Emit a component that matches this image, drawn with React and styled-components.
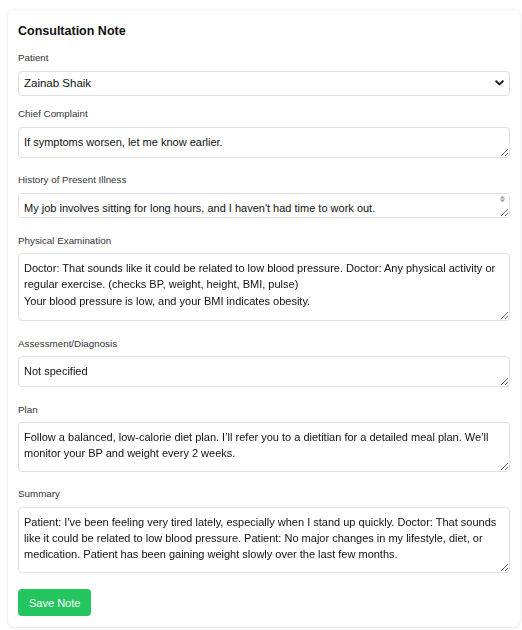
import React, { useState } from "react";
import styled, { createGlobalStyle } from "styled-components";

const GlobalStyle = createGlobalStyle`
  html, body {
    margin: 0;
    padding: 0;
    background: #ffffff;
  }
  body {
    font-family: "Liberation Sans", Arial, sans-serif;
    color: #111111;
  }
`;

const Page = styled.div`
  padding: 10px 2px 2px 8px;
`;

const Card = styled.div`
  background: #ffffff;
  border-radius: 6px;
  box-shadow: 0 0 3px rgba(0, 0, 0, 0.1), 0 1px 2px rgba(0, 0, 0, 0.06);
  padding: 14px 10px 11px 10px;
`;

const Title = styled.h2`
  margin: 0 0 14px 0;
  font-size: 12.5px;
  line-height: 14px;
  font-weight: 700;
  color: #111111;
`;

const Field = styled.div`
  display: flex;
  flex-direction: column;
  margin-bottom: 12px;
`;

const Label = styled.label`
  display: block;
  font-size: 9.8px;
  line-height: 12px;
  color: #333333;
  margin-bottom: 6.5px;
`;

const InputWrap = styled.div`
  position: relative;
`;

const Select = styled.select`
  display: block;
  width: 100%;
  height: 25.5px;
  box-sizing: border-box;
  appearance: none;
  border: 1px solid #e1e1e1;
  border-radius: 4px;
  background: #ffffff;
  padding: 0 24px 0 5px;
  font-family: "Liberation Sans", Arial, sans-serif;
  font-size: 11.5px;
  color: #111111;
  outline: none;
`;

const Chevron = styled.svg`
  position: absolute;
  right: 6px;
  top: 50%;
  width: 9px;
  height: 6px;
  margin-top: -3px;
  pointer-events: none;
`;

const ScrollArrows = styled.svg`
  position: absolute;
  right: 4px;
  top: 2px;
  width: 7px;
  height: 8px;
  pointer-events: none;
`;

const TextArea = styled.textarea`
  display: block;
  width: 100%;
  height: ${(p) => p.$h}px;
  box-sizing: border-box;
  border: 1px solid #e1e1e1;
  border-radius: 4px;
  background: #ffffff;
  padding: 6px 5px;
  margin-bottom: 4.5px;
  font-family: "Liberation Sans", Arial, sans-serif;
  font-size: 11px;
  line-height: 16.4px;
  color: #111111;
  outline: none;
  resize: vertical;
`;

const SaveButton = styled.button`
  display: inline-block;
  align-self: flex-start;
  height: 27px;
  padding: 0 11px;
  border: none;
  border-radius: 4px;
  background: #22c55e;
  color: #ffffff;
  font-family: "Liberation Sans", Arial, sans-serif;
  font-size: 11px;
  cursor: pointer;
`;

const fields = [
  {
    key: "chief",
    label: "Chief Complaint",
    h: 31,
    value: "If symptoms worsen, let me know earlier.",
  },
  {
    key: "history",
    label: "History of Present Illness",
    h: 25.5,
    scroll: true,
    value:
      "My job involves sitting for long hours, and I haven't had time to work out.",
  },
  {
    key: "exam",
    label: "Physical Examination",
    h: 68,
    value:
      "Doctor: That sounds like it could be related to low blood pressure. Doctor: Any physical activity or regular exercise. (checks BP, weight, height, BMI, pulse)\nYour blood pressure is low, and your BMI indicates obesity.",
  },
  {
    key: "assessment",
    label: "Assessment/Diagnosis",
    h: 31,
    value: "Not specified",
  },
  {
    key: "plan",
    label: "Plan",
    h: 49.5,
    value:
      "Follow a balanced, low-calorie diet plan. I\u2019ll refer you to a dietitian for a detailed meal plan. We\u2019ll monitor your BP and weight every 2 weeks.",
  },
  {
    key: "summary",
    label: "Summary",
    h: 66,
    value:
      "Patient: I've been feeling very tired lately, especially when I stand up quickly. Doctor: That sounds like it could be related to low blood pressure. Patient: No major changes in my lifestyle, diet, or medication. Patient has been gaining weight slowly over the last few months.",
  },
];

const App = () => {
  const [patient, setPatient] = useState("zainab");
  const [values, setValues] = useState(
    Object.fromEntries(fields.map((f) => [f.key, f.value]))
  );

  const handleChange = (key, value) => {
    setValues({ ...values, [key]: value });
  };

  return (
    <>
      <GlobalStyle />
      <Page>
        <Card>
          <Title>Consultation Note</Title>
          <Field>
            <Label>Patient</Label>
            <InputWrap>
              <Select value={patient} onChange={(e) => setPatient(e.target.value)}>
                <option value="zainab">Zainab Shaik</option>
              </Select>
              <Chevron viewBox="0 0 9 6">
                <path
                  d="M1.2 1.2 L4.5 4.4 L7.8 1.2"
                  fill="none"
                  stroke="#1a1a1a"
                  strokeWidth="1.9"
                  strokeLinecap="round"
                  strokeLinejoin="round"
                />
              </Chevron>
            </InputWrap>
          </Field>
          {fields.map((f) => (
            <Field key={f.key}>
              <Label>{f.label}</Label>
              <InputWrap>
                <TextArea
                  $h={f.h}
                  value={values[f.key]}
                  onChange={(e) => handleChange(f.key, e.target.value)}
                />
                {f.scroll && (
                  <ScrollArrows viewBox="0 0 7 8">
                    <path d="M1 3.4 L3.5 0.8 L6 3.4 Z" fill="#9a9a9a" />
                    <path d="M1 4.6 L6 4.6 L3.5 7.2 Z" fill="#9a9a9a" />
                  </ScrollArrows>
                )}
              </InputWrap>
            </Field>
          ))}
          <SaveButton>Save Note</SaveButton>
        </Card>
      </Page>
    </>
  );
};

export default App;
